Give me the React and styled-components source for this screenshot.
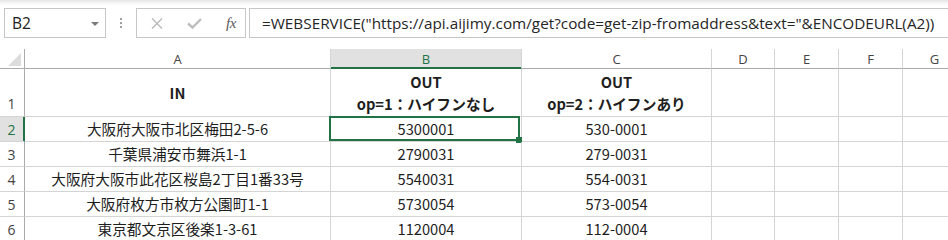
import React from "react";
import styled, { createGlobalStyle, css } from "styled-components";

const GlobalStyle = createGlobalStyle`
  html, body { margin: 0; padding: 0; background: #fff; overflow: hidden; }
  * { box-sizing: border-box; }
`;

const GREEN = "#217346";
const GRID = "#d4d4d4";
const HEADBORDER = "#ababab";
const UI_FONT = `"Open Sans", "Noto Sans", sans-serif`;
const CELL_FONT = `"Noto Sans CJK JP", "Noto Sans", sans-serif`;

const Page = styled.div`
  width: 948px;
  height: 240px;
  overflow: hidden;
  position: relative;
`;

const Toolbar = styled.div`
  height: 49px;
  display: flex;
  align-items: flex-start;
  padding: 8px 0 0 4px;
  background: linear-gradient(#e4e4e4 0px, #f6f6f6 3px, #ffffff 6px);
  & > * { flex-shrink: 0; }
`;

const NameBox = styled.div`
  width: 102px;
  height: 30px;
  border: 1px solid #c6c6c6;
  background: #fff;
  display: flex;
  align-items: center;
  justify-content: space-between;
  padding: 0 6px 0 7px;
  font-family: ${UI_FONT};
  font-size: 15.5px;
  color: #222;
`;

const DropArrow = styled.span`
  width: 0;
  height: 0;
  border-left: 4px solid transparent;
  border-right: 4px solid transparent;
  border-top: 4px solid #7a7a7a;
  margin-top: 1px;
`;

const Grip = styled.div`
  width: 30px;
  height: 30px;
  display: flex;
  flex-direction: column;
  align-items: center;
  justify-content: center;
  gap: 2px;
  & > i {
    display: block;
    width: 2px;
    height: 2px;
    background: #a0a0a0;
  }
`;

const ButtonBox = styled.div`
  width: 110px;
  height: 30px;
  border: 1px solid #c6c6c6;
  display: flex;
  align-items: center;
  padding-left: 11px;
`;

const IconSlot = styled.div`
  width: ${(p) => p.$w}px;
  display: flex;
  align-items: center;
  justify-content: center;
  color: #bdbdbd;
`;

const Fx = styled.span`
  font-family: "Liberation Serif", "DejaVu Serif", serif;
  font-style: italic;
  font-size: 15px;
  color: #5a5a5a;
  letter-spacing: -0.5px;
`;

const FormulaBox = styled.div`
  margin-left: 3px;
  width: 720px;
  height: 30px;
  border: 1px solid #c6c6c6;
  display: flex;
  align-items: center;
  padding-left: 12px;
  font-family: ${UI_FONT};
  font-size: 15.3px;
  color: #262626;
  white-space: nowrap;
`;

const Sheet = styled.div`
  display: grid;
  grid-template-columns: 25px 306px 191px 190px 63px 64px 64px 64px;
  grid-template-rows: 20px 48px repeat(5, 25px);
`;

const Corner = styled.div`
  border-right: 1px solid ${HEADBORDER};
  border-bottom: 1px solid ${HEADBORDER};
  display: flex;
  align-items: flex-end;
  justify-content: flex-end;
  padding: 0 3px 2px 0;
`;

const ColHead = styled.div`
  border-right: 1px solid ${GRID};
  border-bottom: 1px solid ${HEADBORDER};
  display: flex;
  align-items: center;
  justify-content: center;
  font-family: ${UI_FONT};
  font-size: 13px;
  color: #444;
  ${(p) =>
    p.$active &&
    css`
      background: #e1e1e1;
      color: ${GREEN};
      border-bottom-color: ${GREEN};
      box-shadow: inset 0 -1px 0 ${GREEN};
    `}
`;

const RowHead = styled.div`
  border-right: 1px solid ${HEADBORDER};
  border-bottom: 1px solid ${GRID};
  display: flex;
  align-items: ${(p) => (p.$bottom ? "flex-end" : "center")};
  justify-content: center;
  padding-bottom: ${(p) => (p.$bottom ? "3px" : "0")};
  padding-right: 1px;
  font-family: ${UI_FONT};
  font-size: 14px;
  color: #444;
  ${(p) =>
    p.$active &&
    css`
      background: #e1e1e1;
      color: ${GREEN};
      border-right-color: ${GREEN};
      box-shadow: inset -1px 0 0 ${GREEN};
    `}
`;

const Cell = styled.div`
  position: relative;
  border-right: 1px solid ${GRID};
  border-bottom: 1px solid ${GRID};
  display: flex;
  flex-direction: column;
  align-items: center;
  justify-content: center;
  font-family: ${CELL_FONT};
  font-size: 14.67px;
  line-height: 22px;
  color: #1e1e1e;
  white-space: nowrap;
  font-weight: ${(p) => (p.$bold ? 700 : 400)};
`;

const Selection = styled.div`
  position: absolute;
  left: -2px;
  top: -1px;
  right: 1px;
  bottom: 0;
  border: 2px solid ${GREEN};
  pointer-events: none;
`;

const FillHandle = styled.div`
  position: absolute;
  right: -4px;
  bottom: -4px;
  width: 6px;
  height: 6px;
  background: ${GREEN};
`;

const columns = ["A", "B", "C", "D", "E", "F", "G"];

const rows = [
  ["大阪府大阪市北区梅田2-5-6", "5300001", "530-0001"],
  ["千葉県浦安市舞浜1-1", "2790031", "279-0031"],
  ["大阪府大阪市此花区桜島2丁目1番33号", "5540031", "554-0031"],
  ["大阪府枚方市枚方公園町1-1", "5730054", "573-0054"],
  ["東京都文京区後楽1-3-61", "1120004", "112-0004"],
];

export default function App() {
  return (
    <>
      <GlobalStyle />
      <Page>
        <Toolbar>
          <NameBox>
            <span>B2</span>
            <DropArrow />
          </NameBox>
          <Grip>
            <i />
            <i />
            <i />
          </Grip>
          <ButtonBox>
            <IconSlot $w={17}>
              <svg width="12" height="11" viewBox="0 0 12 11">
                <path d="M1 0.5 L11 10.5 M11 0.5 L1 10.5" stroke="#b8b8b8" strokeWidth="1.3" fill="none" />
              </svg>
            </IconSlot>
            <IconSlot $w={58}>
              <svg width="15" height="11" viewBox="0 0 15 11">
                <path d="M1 5.5 L5.5 9.5 L14 1" stroke="#bdbdbd" strokeWidth="2.4" fill="none" />
              </svg>
            </IconSlot>
            <IconSlot $w={16}>
              <Fx>fx</Fx>
            </IconSlot>
          </ButtonBox>
          <FormulaBox>
            =WEBSERVICE("https://api.aijimy.com/get?code=get-zip-fromaddress&amp;text="&amp;ENCODEURL(A2))
          </FormulaBox>
        </Toolbar>
        <Sheet>
          <Corner>
            <svg width="13" height="13" viewBox="0 0 13 13">
              <polygon points="13,0 13,13 0,13" fill="#dcdcdc" />
            </svg>
          </Corner>
          {columns.map((c) => (
            <ColHead key={c} $active={c === "B"}>
              {c}
            </ColHead>
          ))}

          <RowHead $bottom>1</RowHead>
          <Cell $bold>IN</Cell>
          <Cell $bold>
            <span>OUT</span>
            <span>op=1：ハイフンなし</span>
          </Cell>
          <Cell $bold>
            <span>OUT</span>
            <span>op=2：ハイフンあり</span>
          </Cell>
          <Cell />
          <Cell />
          <Cell />
          <Cell />

          {rows.map((r, i) => (
            <React.Fragment key={i}>
              <RowHead $active={i === 0}>{i + 2}</RowHead>
              <Cell>{r[0]}</Cell>
              <Cell>
                {r[1]}
                {i === 0 && (
                  <Selection>
                    <FillHandle />
                  </Selection>
                )}
              </Cell>
              <Cell>{r[2]}</Cell>
              <Cell />
              <Cell />
              <Cell />
              <Cell />
            </React.Fragment>
          ))}
        </Sheet>
      </Page>
    </>
  );
}
